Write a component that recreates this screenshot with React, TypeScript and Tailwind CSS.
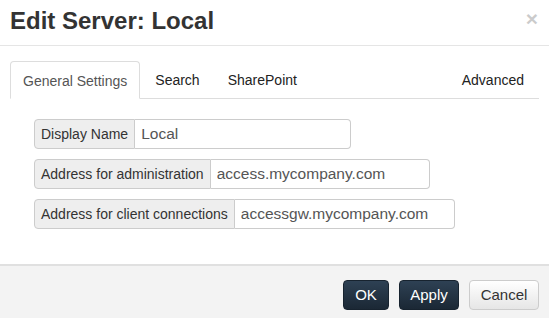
import React from 'react';

interface FieldRowProps {
  label: string;
  value: string;
  inputWidth?: string;
}

const FieldRow: React.FC<FieldRowProps> = ({ label, value, inputWidth = 'w-[219px]' }) => (
  <div className="flex h-[30px]">
    <span className="flex items-center px-[6px] text-[14px] text-[#333] bg-[#eee] border border-[#ccc] rounded-l-[4px] whitespace-nowrap">
      {label}
    </span>
    <input
      readOnly
      value={value}
      className={`${inputWidth} px-[6px] text-[15.5px] text-[#555] bg-white border border-l-0 border-[#ccc] rounded-r-[4px] outline-none`}
    />
  </div>
);

const tabs = ['General Settings', 'Search', 'SharePoint'];

export default function App() {
  return (
    <div className="w-[549px] h-[318px] bg-white flex flex-col font-['Liberation_Sans',Arial,sans-serif] text-[#333] overflow-hidden">
      {/* header */}
      <div className="flex items-start justify-between h-[46px] px-[10px] border-b border-[#e5e5e5]">
        <h3 className="text-[24px] font-bold leading-[26px] mt-[8px] text-[#333]">Edit Server: Local</h3>
        <button className="text-[21px] font-bold leading-none text-black opacity-20 mt-[8px] mr-[1px]">×</button>
      </div>

      {/* body */}
      <div className="flex-1 px-[10px] pt-[15px]">
        <ul className="flex border-b border-[#ddd] text-[14px] h-[38px]">
          {tabs.map((t, i) => (
            <li key={t} className="mr-[2px] -mb-px">
              <a
                className={
                  i === 0
                    ? 'block h-[38px] px-[12px] leading-[38px] text-[#555] bg-white border border-[#ddd] border-b-transparent rounded-t-[4px]'
                    : 'block h-[38px] px-[13px] leading-[38px] text-[#222]'
                }
              >
                {t}
              </a>
            </li>
          ))}
          <li className="ml-auto">
            <a className="block h-[38px] pl-[13px] pr-[15px] leading-[38px] text-[#222]">Advanced</a>
          </li>
        </ul>

        <div className="flex flex-col gap-[10px] pl-[24px] pt-[20px]">
          <FieldRow label="Display Name" value="Local" inputWidth="w-[216px]" />
          <FieldRow label="Address for administration" value="access.mycompany.com" />
          <FieldRow label="Address for client connections" value="accessgw.mycompany.com" inputWidth="w-[220px]" />
        </div>
      </div>

      {/* footer */}
      <div className="h-[54px] flex items-start justify-end gap-[10px] pt-[14px] px-[10px] bg-[#f3f3f3] border-t-2 border-[#e0e0e0]">
        <button className="h-[30px] w-[46px] text-[15px] text-white rounded-[4px] border border-[#17232f] bg-gradient-to-b from-[#2e4154] to-[#1b2835]">
          OK
        </button>
        <button className="h-[30px] w-[60px] text-[15px] text-white rounded-[4px] border border-[#17232f] bg-gradient-to-b from-[#2e4154] to-[#1b2835]">
          Apply
        </button>
        <button className="h-[30px] w-[70px] text-[15px] text-[#333] rounded-[4px] border border-[#ccc] bg-gradient-to-b from-white to-[#e6e6e6]">
          Cancel
        </button>
      </div>
    </div>
  );
}
